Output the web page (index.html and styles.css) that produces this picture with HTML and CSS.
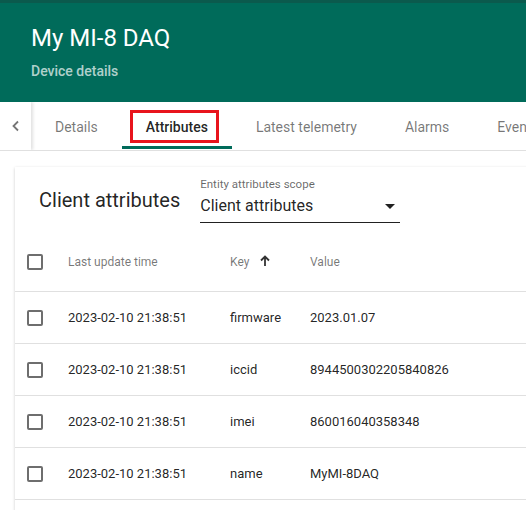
FILE: index.html
```html
<!DOCTYPE html>
<html lang="en">
<head>
<meta charset="UTF-8">
<meta name="viewport" content="width=device-width, initial-scale=1.0">
<title>My MI-8 DAQ - Attributes</title>
<link rel="stylesheet" href="styles.css">
</head>
<body>
  <!-- Device header -->
  <header class="device-header">
    <h1>My MI-8 DAQ</h1>
    <div class="subtitle">Device details</div>
  </header>

  <!-- Tabs -->
  <nav class="tabs">
    <div class="tab-chevron">
      <svg width="12" height="12" viewBox="0 0 12 12"><path d="M8 1.5 L3.5 6 L8 10.5" fill="none" stroke="#757575" stroke-width="1.8"/></svg>
    </div>
    <div class="tab-list">
      <div class="tab">Details</div>
      <div class="tab active">Attributes<span class="highlight"></span></div>
      <div class="tab">Latest telemetry</div>
      <div class="tab">Alarms</div>
      <div class="tab">Events</div>
    </div>
  </nav>

  <div class="content">
    <div class="card">
      <div class="card-toolbar">
        <div class="card-title">Client attributes</div>
        <div class="scope-select">
          <label>Entity attributes scope</label>
          <div class="select-value">
            <span>Client attributes</span>
            <span class="select-arrow"></span>
          </div>
        </div>
      </div>

      <table class="attr-table">
        <thead>
          <tr>
            <th class="col-check"><span class="checkbox"></span></th>
            <th class="col-time">Last update time</th>
            <th class="col-key sorted">Key
              <svg class="sort-icon" width="12" height="12" viewBox="0 0 12 12"><path d="M6 11 V2 M2 5.5 L6 1.5 L10 5.5" fill="none" stroke="#333" stroke-width="1.8"/></svg>
            </th>
            <th class="col-value">Value</th>
          </tr>
        </thead>
        <tbody>
          <tr>
            <td class="col-check"><span class="checkbox"></span></td>
            <td>2023-02-10 21:38:51</td>
            <td>firmware</td>
            <td>2023.01.07</td>
          </tr>
          <tr>
            <td class="col-check"><span class="checkbox"></span></td>
            <td>2023-02-10 21:38:51</td>
            <td>iccid</td>
            <td>8944500302205840826</td>
          </tr>
          <tr>
            <td class="col-check"><span class="checkbox"></span></td>
            <td>2023-02-10 21:38:51</td>
            <td>imei</td>
            <td>860016040358348</td>
          </tr>
          <tr>
            <td class="col-check"><span class="checkbox"></span></td>
            <td>2023-02-10 21:38:51</td>
            <td>name</td>
            <td>MyMI-8DAQ</td>
          </tr>
        </tbody>
      </table>
    </div>
  </div>
</body>
</html>
```

FILE: styles.css
```css
body {
  font-family: Roboto, "Noto Sans", Arial, sans-serif;
  margin: 0;
  background-color: #ffffff;
  overflow: hidden;
  width: 526px;
}

.device-header {
  background-color: #006b5a;
  border-top: 3px solid #0b5a4d;
  height: 102px;
  box-sizing: border-box;
  padding: 19px 31px 0;
  color: #ffffff;
}

.device-header h1 {
  margin: 0;
  font-size: 24px;
  font-weight: 400;
  line-height: 32px;
}

.subtitle {
  margin-top: 9px;
  font-size: 14px;
  font-weight: 500;
  color: rgba(255, 255, 255, 0.7);
}

.tabs {
  display: flex;
  height: 48px;
  border-bottom: 1px solid #e0e0e0;
  overflow: hidden;
}

.tab-chevron {
  width: 31px;
  flex-shrink: 0;
  display: flex;
  align-items: center;
  justify-content: center;
  box-shadow: 2px 0 3px rgba(0, 0, 0, 0.12);
  position: relative;
  z-index: 1;
}

.tab-list {
  display: flex;
  white-space: nowrap;
}

.tab {
  position: relative;
  padding: 1px 24px 0;
  line-height: 49px;
  font-size: 14px;
  color: rgba(0, 0, 0, 0.54);
}

.tab.active {
  color: rgba(0, 0, 0, 0.87);
  font-weight: 500;
}

.tab.active::after {
  content: "";
  position: absolute;
  left: 0;
  right: 0;
  bottom: 1px;
  height: 3px;
  background-color: #006b5a;
}

/* red annotation box around the active tab */
.highlight {
  position: absolute;
  left: 8px;
  right: 13px;
  top: 8px;
  bottom: 7px;
  border: 3px solid #e8141c;
}

.content {
  padding: 16px 0 0 15px;
}

.card {
  width: 560px;
  padding-bottom: 40px;
  background-color: #ffffff;
  box-shadow: 0 1px 3px rgba(0, 0, 0, 0.2);
}

.card-toolbar {
  display: flex;
  align-items: center;
  height: 66px;
  padding: 0 24px;
}

.card-title {
  font-size: 20px;
  color: rgba(0, 0, 0, 0.87);
  margin-right: 20px;
}

.scope-select {
  width: 200px;
}

.scope-select label {
  display: block;
  font-size: 11.5px;
  color: rgba(0, 0, 0, 0.6);
  line-height: 14px;
  margin-bottom: 4px;
}

.select-value {
  display: flex;
  justify-content: space-between;
  align-items: center;
  font-size: 16px;
  color: rgba(0, 0, 0, 0.87);
  line-height: 22px;
  padding-bottom: 5px;
  border-bottom: 1px solid rgba(0, 0, 0, 0.87);
}

.select-arrow {
  width: 0;
  height: 0;
  border-left: 5px solid transparent;
  border-right: 5px solid transparent;
  border-top: 5px solid rgba(0, 0, 0, 0.87);
  margin-right: 5px;
}

.attr-table {
  border-collapse: collapse;
  width: 100%;
}

.attr-table th {
  height: 58px;
  text-align: left;
  font-size: 12px;
  font-weight: 400;
  color: rgba(0, 0, 0, 0.54);
  border-bottom: 1px solid #e0e0e0;
  padding: 0;
}

.sort-icon {
  vertical-align: -1px;
  margin-left: 7px;
}

.attr-table td {
  height: 51px;
  font-size: 13px;
  color: rgba(0, 0, 0, 0.87);
  border-bottom: 1px solid #e0e0e0;
  padding: 0;
}

.col-check {
  width: 41px;
  padding-left: 12px !important;
}

.col-time {
  width: 162px;
}

.col-key {
  width: 80px;
}

.checkbox {
  display: block;
  width: 12px;
  height: 12px;
  border: 2px solid #6e6e6e;
  border-radius: 2px;
}
```
